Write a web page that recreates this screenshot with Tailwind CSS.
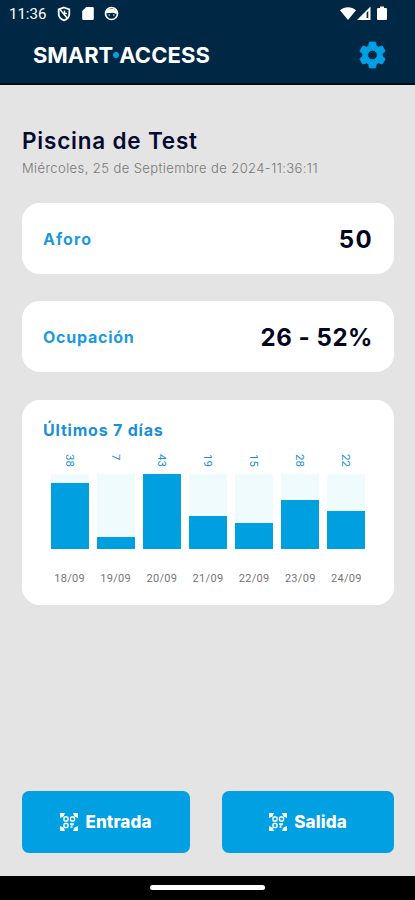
<!DOCTYPE html>
<html lang="es">
<head>
    <meta charset="UTF-8">
    <meta name="viewport" content="width=device-width, initial-scale=1.0">
    <title>Smart Access - Piscina de Test</title>
    <script src="https://cdn.jsdelivr.net/npm/@tailwindcss/browser@4"></script>
</head>
<body class="bg-[#e4e4e4] font-['Inter',sans-serif]">
    <div class="flex flex-col w-[415px] h-[900px] overflow-hidden">
        <!-- Status bar and header -->
        <header class="h-[85px] shrink-0 bg-[#002744] border-b-2 border-[#000c1c]">
            <div class="flex items-center justify-between h-[27px] pl-[9px] pr-[28px] text-white">
                <div class="flex items-center">
                    <span class="w-[38px] pt-[2px] font-['Roboto',sans-serif] text-[15px] leading-none whitespace-nowrap">11:36</span>
                    <svg class="ml-[10px]" width="14" height="16" viewBox="0 0 14 16" fill="none" stroke="currentColor" stroke-width="1.8">
                        <path d="M7 1.500 12.300 3.400V8c0 3-2.300 5.200-5.300 6.400C4 13.200 1.700 11 1.700 8V3.400z" />
                        <path d="M3 3.500 10.500 12.500M7.500 4.500V7.500H10" stroke-width="1.500" />
                    </svg>
                    <svg class="ml-[11px]" width="12" height="15" viewBox="0 0 12 15" fill="currentColor">
                        <path d="M4.300 1H10.500Q11.800 1 11.800 2.300V12.700Q11.800 14 10.500 14H1.500Q.2 14 .2 12.700V5z" />
                    </svg>
                    <svg class="ml-[10px]" width="15" height="15" viewBox="0 0 15 15" fill="none" stroke="currentColor">
                        <circle cx="7.500" cy="7.500" r="6" stroke-width="1.700" />
                        <path d="M2 6C3 1.500 12 1.500 13 6L12.500 8 9 6.800 2 7.200z" fill="currentColor" stroke="none" />
                        <path d="M4.500 9h1.500M9 9h1.500" stroke-width="1.200" />
                    </svg>
                </div>
                <div class="flex items-center">
                    <svg width="16" height="15" viewBox="0 0 16 15" fill="currentColor">
                        <path d="M0 4.200C4.500.1 11.500.1 16 4.200L8 14z" />
                    </svg>
                    <svg class="ml-px" width="14" height="15" viewBox="0 0 14 15" fill="currentColor">
                        <path d="M0 14 13.500.500V14z" />
                        <path d="M9.600 6.500 11.300 5V12H9.600z" fill="#002744" />
                    </svg>
                    <svg class="ml-[6px]" width="10" height="15" viewBox="0 0 10 15" fill="currentColor">
                        <path d="M3 .500H7V2H9Q10 2 10 3V13Q10 14 9 14H1Q0 14 0 13V3Q0 2 1 2H3z" />
                    </svg>
                </div>
            </div>
            <div class="flex items-center justify-between h-14 pl-[33px] pr-[29px]">
                <h1 class="flex items-center text-[22px] leading-none font-bold text-white whitespace-nowrap">
                    <span class="tracking-[-0.05px]">SMART</span>
                    <span class="size-[6px] rounded-full bg-[#00a1e4]"></span>
                    <span class="tracking-[0.1px]">ACCESS</span>
                </h1>
                <button class="text-[#00a0e3]" aria-label="Ajustes">
                    <svg width="27" height="28" viewBox="2 1.600 20 20.800" preserveAspectRatio="none" fill="currentColor" stroke="currentColor" stroke-width=".7">
                        <path d="M19.140 12.940c.04-.3.060-.61.060-.94 0-.32-.02-.64-.07-.94l2.030-1.580a.49.49 0 0 0 .12-.61l-1.920-3.320a.488.488 0 0 0-.59-.22l-2.390.96c-.5-.38-1.030-.7-1.620-.94l-.36-2.540a.484.484 0 0 0-.48-.41h-3.840c-.24 0-.43.17-.47.41l-.36 2.540c-.59.24-1.130.57-1.620.94l-2.390-.96c-.22-.08-.47 0-.59.22L2.740 8.870c-.12.21-.08.47.12.61l2.030 1.580c-.05.3-.09.63-.09.94s.02.64.07.94l-2.030 1.580a.49.49 0 0 0-.12.61l1.920 3.320c.12.22.37.29.59.22l2.390-.96c.5.38 1.030.7 1.620.94l.36 2.540c.05.24.24.41.48.41h3.840c.24 0 .44-.17.47-.41l.36-2.540c.59-.24 1.130-.56 1.620-.94l2.390.96c.22.08.47 0 .59-.22l1.920-3.320c.12-.22.070-.47-.12-.61zM12 15.600A3.600 3.600 0 1 1 12 8.400a3.600 3.600 0 0 1 0 7.200z" />
                    </svg>
                </button>
            </div>
        </header>

        <main class="flex flex-col flex-1 pt-[42px] pl-[22px] pr-[21px] pb-[23px]">
            <h2 class="text-[22.5px] leading-[28px] font-semibold tracking-[0.8px] text-[#08092f] whitespace-nowrap">Piscina de Test</h2>
            <p class="mt-[4px] text-[13px] leading-[18px] font-light tracking-[0.41px] text-[#777777] whitespace-nowrap">Miércoles, 25 de Septiembre de 2024-11:36:11</p>

            <div class="flex items-center justify-between h-[71px] mt-[26px] px-[21px] bg-white rounded-[18px]">
                <span class="text-base font-bold tracking-[1.1px] text-[#1b9ae0]">Aforo</span>
                <span class="text-2xl font-bold tracking-[1.4px] text-[#04051f] pt-[2px]">50</span>
            </div>

            <div class="flex items-center justify-between h-[71px] mt-[27px] px-[21px] bg-white rounded-[18px]">
                <span class="text-base font-bold tracking-[0.75px] text-[#1b9ae0]">Ocupación</span>
                <span class="text-2xl font-bold tracking-[0.55px] text-[#04051f] pt-[2px]">26 - 52%</span>
            </div>

            <!-- Last 7 days -->
            <div class="h-[205px] mt-[28px] pt-[18px] px-[21px] bg-white rounded-[18px]">
                <h3 class="text-base leading-6 font-bold tracking-[0.8px] text-[#1b8fda]">Últimos 7 días</h3>
                <div id="chart" class="flex gap-[8px] w-[315px] mt-[9px] ml-[7.500px]"></div>
            </div>

            <div class="flex gap-8 mt-auto text-white text-[17px] font-extrabold">
                <button class="flex items-center justify-center w-[168px] h-[62px] gap-[7px] bg-[#00a0e3] rounded-[7px]">
                    <svg width="18" height="18" viewBox="0 0 18 18" fill="none" stroke="currentColor" stroke-width="1.400">
                        <path d="M0 0H5L3.500 3.500 0 5zM18 0V5L14.500 3.500 13 0zM18 18H13L14.500 14.500 18 13zM0 18V13L3.500 14.500 5 18z" fill="currentColor" stroke="none" />
                        <rect x="4" y="4" width="4" height="4" rx="1" />
                        <rect x="10.500" y="4" width="4" height="4" rx="1" />
                        <rect x="4" y="10.500" width="4" height="4" rx="1" />
                        <path d="M10 11H12V13M12.500 11H14M10.500 14H12.500" />
                    </svg>
                    <span class="pt-px tracking-[0.1px]">Entrada</span>
                </button>
                <button class="flex items-center justify-center w-[172px] h-[62px] gap-[7px] bg-[#00a0e3] rounded-[7px]">
                    <svg width="18" height="18" viewBox="0 0 18 18" fill="none" stroke="currentColor" stroke-width="1.400">
                        <path d="M0 0H5L3.500 3.500 0 5zM18 0V5L14.500 3.500 13 0zM18 18H13L14.500 14.500 18 13zM0 18V13L3.500 14.500 5 18z" fill="currentColor" stroke="none" />
                        <rect x="4" y="4" width="4" height="4" rx="1" />
                        <rect x="10.500" y="4" width="4" height="4" rx="1" />
                        <rect x="4" y="10.500" width="4" height="4" rx="1" />
                        <path d="M10 11H12V13M12.500 11H14M10.500 14H12.500" />
                    </svg>
                    <span class="pt-px tracking-[0.15px]">Salida</span>
                </button>
            </div>
        </main>

        <!-- System navigation -->
        <div class="flex justify-center h-[24px] shrink-0 pt-[9px] bg-black">
            <div class="w-[115px] h-[5px] rounded-full bg-white"></div>
        </div>
    </div>

    <script>
        const days = [
            { date: '18/09', total: 38 },
            { date: '19/09', total: 7 },
            { date: '20/09', total: 43 },
            { date: '21/09', total: 19 },
            { date: '22/09', total: 15 },
            { date: '23/09', total: 28 },
            { date: '24/09', total: 22 }
        ];
        const max = Math.max(...days.map(day => day.total));
        const chart = document.getElementById('chart');

        days.forEach(day => {
            chart.innerHTML += `
                <div class="flex flex-col items-center flex-1 font-['Roboto',sans-serif]">
                    <span class="h-[23px] pt-[3px] text-[11.5px] leading-[14px] text-[#1b8fda] [writing-mode:vertical-rl]">${day.total}</span>
                    <div class="flex items-end w-full h-[75px] bg-[#effbfc]">
                        <div class="w-full bg-[#00a0e0]" style="height: ${day.total / max * 100}%"></div>
                    </div>
                    <span class="mt-[22px] text-[11px] leading-4 tracking-[0.3px] text-[#777777] whitespace-nowrap">${day.date}</span>
                </div>`;
        });
    </script>
</body>
</html>
